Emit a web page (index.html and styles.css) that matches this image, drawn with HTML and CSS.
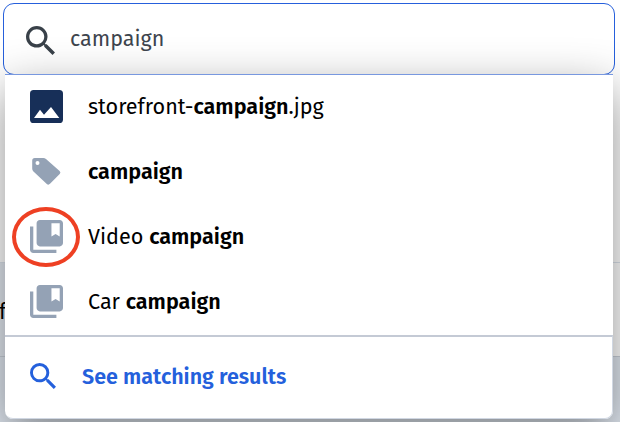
FILE: index.html
```html
<!DOCTYPE html>
<html lang="en">
<head>
<meta charset="utf-8">
<title>Search</title>
<link rel="stylesheet" href="styles.css">
</head>
<body>
<svg class="defs" width="0" height="0">
  <symbol id="search" viewBox="3 3 17.5 17.5"><path d="M15.5 14h-.79l-.28-.27A6.471 6.471 0 0 0 16 9.5 6.5 6.5 0 1 0 9.5 16c1.61 0 3.09-.59 4.23-1.57l.27.28v.79l5 4.99L20.49 19l-4.99-5zm-6 0C7.01 14 5 11.99 5 9.5S7.01 5 9.5 5 14 7.01 14 9.5 11.99 14 9.5 14z"/></symbol>
  <symbol id="collection" viewBox="2 2 20 20"><path d="M4 6H2v14c0 1.1.9 2 2 2h14v-2H4V6z"/><path d="M20 2H8c-1.1 0-2 .9-2 2v12c0 1.1.9 2 2 2h12c1.1 0 2-.9 2-2V4c0-1.1-.9-2-2-2zm0 10-2.5-1.5L15 12V4h5v8z"/></symbol>
</svg>
<div class="backdrop"><div class="band-top"></div><div class="band-mid"><span>f</span></div><div class="band-low"></div></div>
<main class="search">
  <div class="field"><svg class="icon-field"><use href="#search"/></svg><span class="query">campaign</span></div>
  <div class="panel">
    <ul class="list">
      <li><span class="slot"><svg width="33" height="33" viewBox="0 0 33 33"><rect width="33" height="33" rx="3.6" fill="#172f58"/><path fill="#fff" d="M4 28l6-8.2 4 4.9L21 17l8.3 11z"/></svg></span><span class="label">storefront-<b>campaign</b>.jpg</span></li>
      <li><span class="slot"><svg width="33" height="33" viewBox="0 0 33 33"><path fill="#94a2b5" fill-rule="evenodd" d="M4.8 3H13.3Q14.8 3 16 4.1L29.6 16Q31.2 17.5 29.7 19L20 28.8Q18.4 30.4 16.8 28.9L3.2 16.2Q2.2 15.2 2.2 13.6V5.6Q2.2 3 4.8 3zM7.5 6a2 2 0 1 0 0 4 2 2 0 0 0 0-4z"/></svg></span><span class="label"><b>campaign</b></span></li>
      <li><span class="slot marked"><svg class="collection"><use href="#collection"/></svg></span><span class="label">Video <b>campaign</b></span></li>
      <li><span class="slot"><svg class="collection"><use href="#collection"/></svg></span><span class="label">Car <b>campaign</b></span></li>
    </ul>
    <div class="footer"><svg class="icon-footer"><use href="#search"/></svg><span class="results">See matching results</span></div>
  </div>
</main>
</body>
</html>
```
FILE: styles.css
```css
* { box-sizing: border-box; }
body { margin: 0; width: 620px; height: 422px; overflow: hidden; position: relative; background: #fff; font-family: "Fira Sans", "Open Sans", "Noto Sans", sans-serif; font-size: 21.6px; color: #000; }
.defs { position: absolute; }
.backdrop { position: absolute; inset: 0; display: flex; flex-direction: column; }
.band-top { height: 262px; }
.band-mid { height: 94px; border-top: 1px solid #dce3ec; background: linear-gradient(90deg, #e3e9f1 50%, #fff 50%); }
.band-mid span { display: block; margin: 34px 0 0 -1px; line-height: 30px; }
.band-low { flex: 1; border-top: 1px solid #c9d0d9; background: #e1e8f1; }
.search { position: relative; padding: 3px 5px 0 3px; }
.field { height: 72px; border: 1px solid #2660dc; border-radius: 11px; background: #fff; display: flex; align-items: center; padding-left: 22px; }
.icon-field { width: 29px; height: 29px; fill: #394149; margin-top: 3px; }
.query { margin-left: 15px; color: #3e454e; font-size: 21.5px; line-height: 30px; margin-top: -1px; }
.panel { position: relative; width: 608px; height: 345px; margin: -1px 0 0 2px; border-radius: 0 0 8px 8px; background: #fff; box-shadow: 0 16px 48px rgba(0,0,0,.44); border-top: 1px solid #7898df; }
.list { margin: 0; padding: 0; height: 260px; list-style: none; }
.list li { height: 65px; display: flex; align-items: center; padding: 0 0 2px 25px; }
.slot { width: 33px; height: 33px; margin-right: 25px; position: relative; }
.slot svg { display: block; }
.collection { width: 33px; height: 33px; fill: #94a2b5; }
.marked::after { content: ""; position: absolute; box-sizing: border-box; left: -18px; top: -13px; width: 68px; height: 60px; border: 4px solid #ee4023; border-radius: 50%; }
.label { white-space: nowrap; line-height: 30px; }
b { font-weight: 600; }
.footer { height: 84px; border: 1px solid #d0d7e2; border-top: 2px solid #c4cad5; border-left: 0; border-radius: 0 0 8px 8px; display: flex; align-items: center; padding: 0 0 2px 25px; }
.icon-footer { width: 26px; height: 26px; fill: #2460dc; margin-top: -2px; }
.results { margin-left: 26px; font-size: 21.5px; line-height: 30px; font-weight: 600; color: #2460dc; white-space: nowrap; }
```
